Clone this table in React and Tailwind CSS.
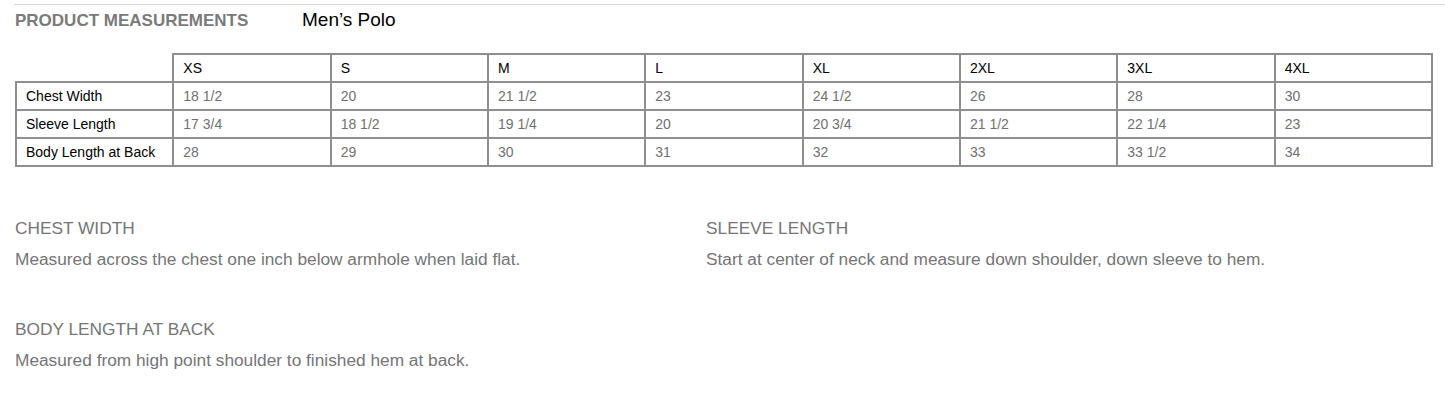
import React from 'react';

const sizes = ['XS', 'S', 'M', 'L', 'XL', '2XL', '3XL', '4XL'];

const rows = [
    { label: 'Chest Width', values: ['18 1/2', '20', '21 1/2', '23', '24 1/2', '26', '28', '30'] },
    { label: 'Sleeve Length', values: ['17 3/4', '18 1/2', '19 1/4', '20', '20 3/4', '21 1/2', '22 1/4', '23'] },
    { label: 'Body Length at Back', values: ['28', '29', '30', '31', '32', '33', '33 1/2', '34'] },
];

const notes = [
    { title: 'CHEST WIDTH', text: 'Measured across the chest one inch below armhole when laid flat.' },
    { title: 'SLEEVE LENGTH', text: 'Start at center of neck and measure down shoulder, down sleeve to hem.' },
    { title: 'BODY LENGTH AT BACK', text: 'Measured from high point shoulder to finished hem at back.' },
];

const cell = 'border-2 border-[#8e8e8e] px-[9px] h-[28px] text-left align-middle text-[14px] font-normal';

const App = () => {
    return (
        <div className="w-[1445px] h-[418px] bg-white pt-[4px] pl-[14px] font-['Liberation_Sans',Arial,sans-serif]">
            <div className="border-t border-[#d2d2d2]" />

            <div className="flex items-baseline mt-[3px] pl-[1px] leading-[24px]">
                <h1 className="w-[287px] text-[17px] font-bold text-[#7a7a7a]">PRODUCT MEASUREMENTS</h1>
                <span className="text-[19px] text-black">Men’s Polo</span>
            </div>

            {/* Size table */}
            <table className="mt-[20px] ml-[1px] w-[1418px] table-fixed border-collapse">
                <thead>
                    <tr>
                        <th className="h-[28px]" />
                        {sizes.map((s) => (
                            <th key={s} className={`${cell} text-black`}>{s}</th>
                        ))}
                    </tr>
                </thead>
                <tbody>
                    {rows.map((row) => (
                        <tr key={row.label}>
                            <td className={`${cell} text-black`}>{row.label}</td>
                            {row.values.map((v, i) => (
                                <td key={i} className={`${cell} text-[#707070]`}>{v}</td>
                            ))}
                        </tr>
                    ))}
                </tbody>
            </table>

            {/* Measurement notes */}
            <div className="grid grid-cols-[691px_1fr] gap-y-[50px] mt-[51px] pl-[1px] text-[#757575]">
                {notes.map((n) => (
                    <div key={n.title}>
                        <h2 className="text-[17.3px] leading-[20px]">{n.title}</h2>
                        <p className="mt-[11px] text-[17.3px] leading-[20px]">{n.text}</p>
                    </div>
                ))}
            </div>
        </div>
    );
};

export default App;
